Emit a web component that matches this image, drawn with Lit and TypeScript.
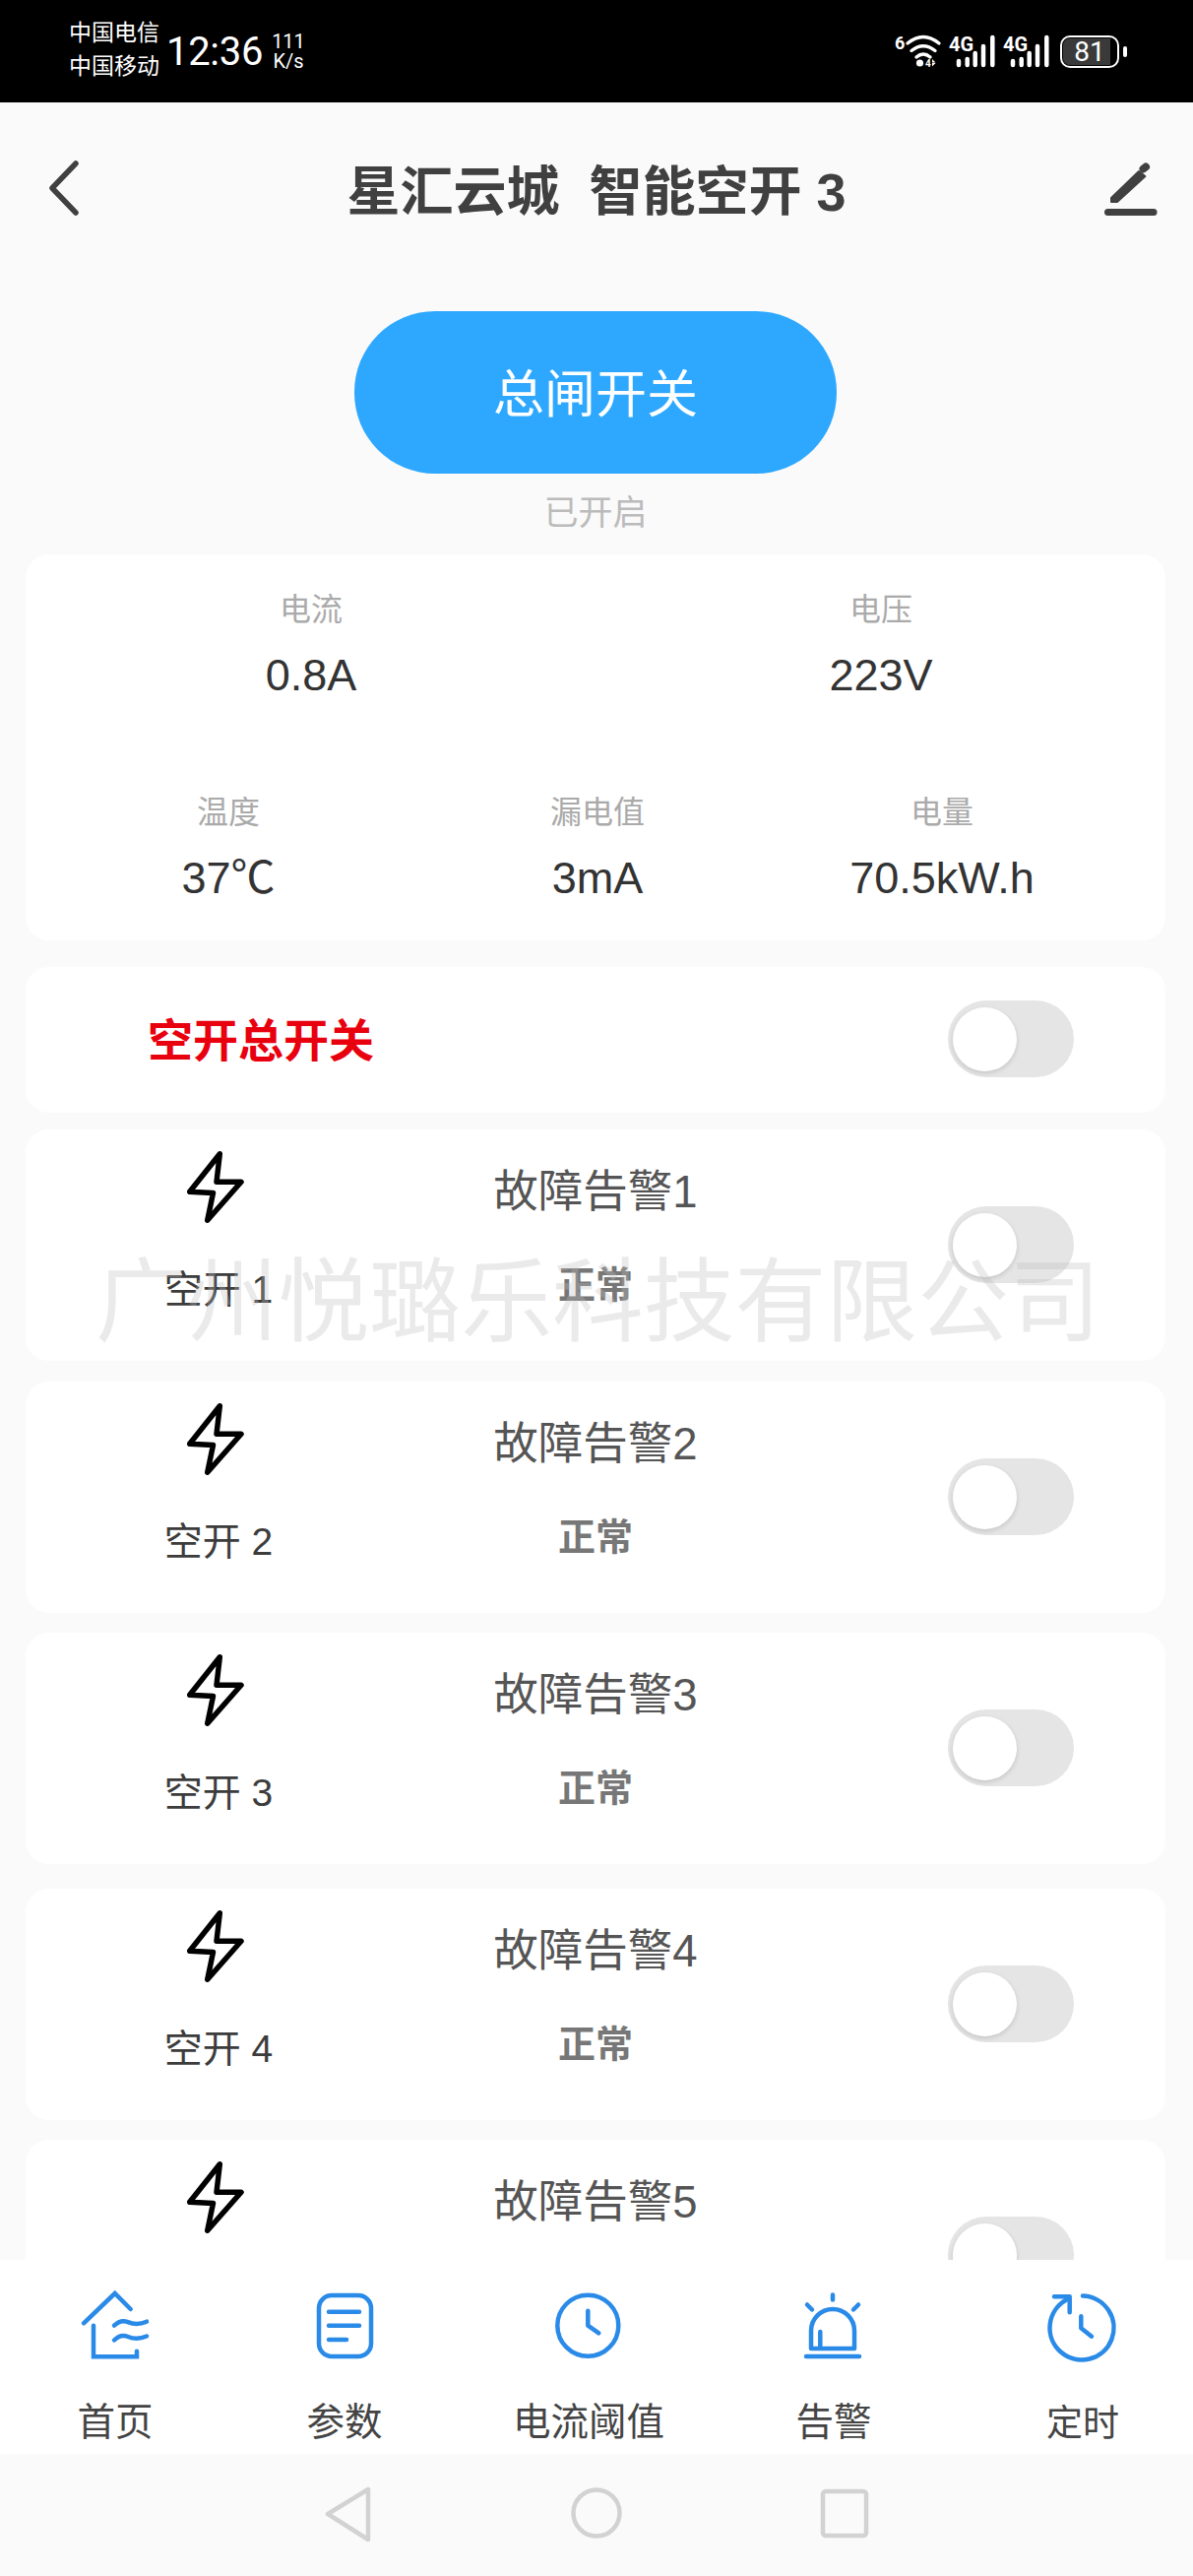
import { LitElement, html, css } from 'lit';
import { customElement, property } from 'lit/decorators.js';

const signalIcon = html`<svg class="signal" width="48" height="34" viewBox="0 0 48 34">
  <text x="0" y="17" class="net">4G</text>
  <g stroke="#fff" stroke-width="4.5" stroke-linecap="round">
    <path d="M10 27v4M18.7 25v6M26.7 19v12M35 12v19M44.3 3v28" />
  </g>
</svg>`;

const tabIcons = {
  home: html`<svg width="100" height="90" viewBox="-3 0 100 90" fill="none" stroke="#2a8ae8" stroke-width="4.5" stroke-linecap="round">
    <path d="M15 44.3 46.7 14 62.7 30" />
    <path d="M25 46.7V78.3H69V72.7" />
    <path d="M46 46.7c4-4 8-6 14-3.5s12 2.5 19-.5" />
    <path d="M46 61.5c4-4 8-6 14-3.5s12 2.5 19-.5" />
  </svg>`,
  params: html`<svg width="100" height="90" viewBox="0 0 100 90" fill="none" stroke="#2a8ae8" stroke-width="4.5" stroke-linecap="round">
    <rect x="24" y="16" width="53" height="62" rx="13" />
    <path d="M34 32.7H65M34 46.7H65M34 61H52" />
  </svg>`,
  clock: html`<svg width="100" height="90" viewBox="0 0 100 90" fill="none" stroke="#2a8ae8" stroke-width="4.5" stroke-linecap="round" stroke-linejoin="round">
    <circle cx="49.3" cy="46.7" r="31" />
    <path d="M49.3 31.7V46.7L60.3 54.3" />
  </svg>`,
  alarm: html`<svg width="100" height="90" viewBox="-3 0 100 90" fill="none" stroke="#2a8ae8" stroke-width="4.5" stroke-linecap="round" stroke-linejoin="round">
    <path d="M24 70V52A22 22 0 0 1 68 52V70Z" />
    <path d="M33.3 53V69M19 78H73M46 15.5V20.5M20 25.5 25 30.5M72 25.5 67 30.5" />
  </svg>`,
  timer: html`<svg width="100" height="90" viewBox="0 0 100 90" fill="none" stroke="#2a8ae8" stroke-width="4.5" stroke-linecap="round" stroke-linejoin="round">
    <path d="M50 16.5A32.5 32.5 0 1 1 33 20.7" />
    <path d="M21 17.3H36.7V33.3M48.3 37.3V49.3L59 57.7" />
  </svg>`,
};

const tabs = [
  { label: '首页', icon: tabIcons.home },
  { label: '参数', icon: tabIcons.params },
  { label: '电流阈值', icon: tabIcons.clock },
  { label: '告警', icon: tabIcons.alarm },
  { label: '定时', icon: tabIcons.timer },
];

@customElement('breaker-row')
export class BreakerRow extends LitElement {
  @property({ type: Number }) index = 1;

  static override styles = css`
    :host {
      display: flex;
      align-items: flex-start;
      height: 235px;
      background: #fff;
      border-radius: 24px;
    }

    .left {
      width: 392px;
      display: flex;
      flex-direction: column;
      align-items: center;
      padding-top: 20px;
      gap: 40px;
      font-size: 39px;
      line-height: 50px;
      color: #3c3c3c;
    }

    .bolt {
      margin-left: 6px;
      display: block;
    }

    .mid {
      width: 374px;
      display: flex;
      flex-direction: column;
      align-items: center;
      padding-top: 34px;
      gap: 39px;
    }

    .fault {
      font-size: 45.5px;
      line-height: 60px;
      color: #555;
    }

    .state {
      font-size: 38px;
      line-height: 50px;
      font-weight: 700;
      color: #777;
    }

    .track {
      margin: 78px 93px 0 auto;
      width: 128px;
      height: 78px;
      box-sizing: border-box;
      padding-left: 5px;
      display: flex;
      align-items: center;
      background: #e5e5e5;
      border-radius: 39px;
    }

    .thumb {
      width: 65px;
      height: 65px;
      border-radius: 50%;
      background: #fff;
      box-shadow: 0 2px 5px rgba(0, 0, 0, 0.14);
    }
  `;

  protected override render() {
    return html`
      <div class="left">
        <svg class="bolt" width="70" height="78" viewBox="20 16 70 78" fill="none" stroke="#000" stroke-width="5.5" stroke-linejoin="round" stroke-linecap="round">
          <path d="M53.3 20.7 22.7 59.3 46.5 60.5 40.7 88.3 75 49.3H50Z" />
        </svg>
        <span>空开 ${this.index}</span>
      </div>
      <div class="mid">
        <span class="fault">故障告警${this.index}</span>
        <span class="state">正常</span>
      </div>
      <div class="track"><div class="thumb"></div></div>
    `;
  }
}

@customElement('app-root')
export class AppRoot extends LitElement {
  static override styles = css`
    :host {
      display: flex;
      flex-direction: column;
      position: relative;
      height: 2616px;
      overflow: hidden;
      background: #fafafa;
      font-family: 'Liberation Sans', 'Noto Sans CJK SC', sans-serif;
    }

    /* Status bar */
    .status {
      flex: none;
      height: 104px;
      background: #000;
      color: #fff;
      display: flex;
      align-items: center;
      padding: 0 67px 0 70px;
      box-sizing: border-box;
    }

    .carriers {
      display: flex;
      flex-direction: column;
      font-size: 23px;
      line-height: 34px;
      padding-bottom: 4px;
    }

    .time {
      font-family: Roboto, sans-serif;
      font-size: 40px;
      margin-left: 7px;
      letter-spacing: -0.3px;
    }

    .speed {
      display: flex;
      flex-direction: column;
      align-items: center;
      font-family: Roboto, sans-serif;
      font-size: 20px;
      line-height: 20px;
      margin-left: 9px;
    }

    .sys {
      margin-left: auto;
      display: flex;
      align-items: center;
    }

    .sys svg {
      display: block;
      overflow: visible;
    }

    .signal {
      margin-left: 7px;
    }

    .net {
      font: 700 20px 'Roboto', sans-serif;
      fill: #fff;
    }

    .wifi-six {
      font: 700 18px 'Roboto', sans-serif;
      fill: #fff;
    }

    .tiny {
      font: 700 10px 'Roboto', sans-serif;
      fill: #fff;
    }

    .batt {
      margin-left: 10px;
      width: 60px;
      height: 33px;
      box-sizing: border-box;
      border: 2.5px solid #fff;
      border-radius: 10px;
      background: linear-gradient(90deg, #3a3a3a 88%, #000 88%);
      background-clip: content-box;
      padding: 1px;
      font-family: Roboto, sans-serif;
      font-size: 28px;
      line-height: 27px;
      text-align: center;
    }

    .batt-cap {
      width: 4px;
      height: 11px;
      margin-left: 4px;
      border-radius: 2px;
      background: #fff;
    }

    /* Scrolling page */
    .page {
      flex: 1;
      min-height: 0;
      overflow: hidden;
      display: flex;
      flex-direction: column;
      padding: 0 28px 0 26px;
    }

    .head {
      flex: none;
      height: 178px;
      margin: 0 8px 0 10px;
      display: grid;
      grid-template-columns: 1fr auto 1fr;
      align-items: center;
    }

    .back {
      margin: 0 0 4px 12px;
      display: block;
    }

    .edit {
      justify-self: end;
      display: block;
    }

    .title {
      font-size: 54px;
      font-weight: 700;
      color: #404040;
      white-space: pre;
      padding-bottom: 6px;
    }

    .main-btn {
      flex: none;
      align-self: center;
      margin-top: 34px;
      width: 490px;
      height: 165px;
      box-sizing: border-box;
      padding-bottom: 5px;
      border-radius: 82px;
      background: #2ea8ff;
      color: #fff;
      font-size: 52px;
      display: flex;
      align-items: center;
      justify-content: center;
    }

    .btn-state {
      flex: none;
      text-align: center;
      font-size: 35px;
      line-height: 40px;
      margin-top: 20px;
      color: #bbb;
    }

    .stats {
      flex: none;
      margin-top: 22px;
      height: 392px;
      box-sizing: border-box;
      padding-top: 34px;
      background: #fff;
      border-radius: 24px;
      display: flex;
      flex-direction: column;
      gap: 87px;
    }

    .stats-row {
      display: grid;
      grid-template-columns: 580px 578px;
    }

    .stats-row.three {
      grid-template-columns: 412px 338px 362px;
    }

    .stat {
      display: flex;
      flex-direction: column;
      align-items: center;
    }

    .stat-label {
      font-size: 32px;
      line-height: 44px;
      color: #aaa;
    }

    .stat-value {
      margin-top: 15px;
      font-size: 45px;
      line-height: 60px;
      color: #333;
    }

    .main-switch {
      flex: none;
      margin-top: 27px;
      height: 148px;
      background: #fff;
      border-radius: 24px;
      display: flex;
      align-items: center;
      padding-left: 124px;
      font-size: 46px;
      font-weight: 700;
      color: #e8000f;
    }

    .main-switch span {
      padding-bottom: 6px;
    }

    .track {
      margin: 0 93px 2px auto;
      width: 128px;
      height: 78px;
      box-sizing: border-box;
      padding-left: 5px;
      display: flex;
      align-items: center;
      background: #e5e5e5;
      border-radius: 39px;
    }

    .thumb {
      width: 65px;
      height: 65px;
      border-radius: 50%;
      background: #fff;
      box-shadow: 0 2px 5px rgba(0, 0, 0, 0.14);
    }

    breaker-row {
      flex: none;
      margin-top: 20px;
    }

    .r1 {
      margin-top: 17px;
    }

    .r2 {
      margin-top: 21px;
    }

    .r4 {
      margin-top: 25px;
    }

    /* Bottom tabs */
    .tabs {
      flex: none;
      height: 197px;
      background: #fff;
      display: grid;
      grid-template-columns: 230px 240px 256px 242px 244px;
    }

    .tab {
      display: flex;
      flex-direction: column;
      align-items: center;
      padding-top: 20px;
      font-size: 38.5px;
      line-height: 50px;
      color: #444;
    }

    .tab svg {
      display: block;
      margin-bottom: 30px;
    }

    .tab:first-child {
      padding-left: 4px;
    }

    .tab:last-child {
      padding-left: 20px;
      font-size: 37px;
    }

    .tab:last-child svg {
      margin-bottom: 32px;
    }

    .navbar {
      flex: none;
      height: 124px;
      background: #fafafa;
    }

    .navbar svg {
      display: block;
    }

    .watermark {
      position: absolute;
      left: 97px;
      top: 1258px;
      font-size: 92.8px;
      line-height: 130px;
      white-space: nowrap;
      color: rgba(190, 190, 190, 0.32);
      pointer-events: none;
    }
  `;

  protected override render() {
    return html`
      <div class="status">
        <div class="carriers"><span>中国电信</span><span>中国移动</span></div>
        <span class="time">12:36</span>
        <div class="speed"><span>111</span><span>K/s</span></div>
        <div class="sys">
          <svg width="48" height="34" viewBox="0 0 48 34" fill="none" stroke="#fff" stroke-linecap="round">
            <text x="0" y="15" class="wifi-six" stroke="none">6</text>
            <g stroke-width="3.4">
              <path d="M13 9Q29 -4 45 9" />
              <path d="M17 16.5Q29 7 41 16.5" />
              <path d="M22 23Q29 17 36 23" />
            </g>
            <circle cx="25.5" cy="29" r="3.6" fill="#fff" stroke="none" />
            <text x="31" y="32.5" class="tiny" stroke="none">4</text>
            <path d="M38 25 41.5 28.5H38ZM38 29 41.5 29 38 32.5Z" fill="#fff" stroke="none" />
          </svg>
          ${signalIcon} ${signalIcon}
          <div class="batt">81</div>
          <div class="batt-cap"></div>
        </div>
      </div>

      <div class="page">
        <div class="head">
          <svg class="back" width="34" height="56" viewBox="0 0 34 56" fill="none" stroke="#404040" stroke-width="5.5" stroke-linecap="round" stroke-linejoin="round">
            <path d="M29 3 5 28 29 53" />
          </svg>
          <span class="title">星汇云城  智能空开 3</span>
          <svg class="edit" width="56" height="58" viewBox="0 0 56 58" fill="#404040">
            <path d="M9 37 37 10 43.4 15 15 41H9Z" stroke="#404040" stroke-width="2" stroke-linejoin="round" />
            <path d="M41.5 7.5 44 5.5" stroke="#404040" stroke-width="8" stroke-linecap="round" />
            <path d="M5.5 51.5H52" stroke="#404040" stroke-width="7" stroke-linecap="round" />
          </svg>
        </div>

        <div class="main-btn">总闸开关</div>
        <div class="btn-state">已开启</div>

        <div class="stats">
          <div class="stats-row">
            ${this.stat('电流', '0.8A')}
            ${this.stat('电压', '223V')}
          </div>
          <div class="stats-row three">
            ${this.stat('温度', '37℃')}
            ${this.stat('漏电值', '3mA')}
            ${this.stat('电量', '70.5kW.h')}
          </div>
        </div>

        <div class="main-switch">
          <span>空开总开关</span>
          <div class="track"><div class="thumb"></div></div>
        </div>

        ${[1, 2, 3, 4, 5].map((n) => html`<breaker-row class="r${n}" .index=${n}></breaker-row>`)}
      </div>

      <div class="tabs">
        ${tabs.map((t) => html`<div class="tab">${t.icon}<span>${t.label}</span></div>`)}
      </div>

      <div class="navbar">
        <svg width="1212" height="124" viewBox="0 0 1212 124" fill="none" stroke="#d2d2d2" stroke-width="4.5" stroke-linejoin="round">
          <path d="M333 61 374 36V87Z" />
          <circle cx="606" cy="60" r="23.5" />
          <rect x="836" y="38" width="44" height="45" rx="3" />
        </svg>
      </div>

      <div class="watermark">广州悦璐乐科技有限公司</div>
    `;
  }

  private stat(label: string, value: string) {
    return html`<div class="stat">
      <span class="stat-label">${label}</span>
      <span class="stat-value">${value}</span>
    </div>`;
  }
}
